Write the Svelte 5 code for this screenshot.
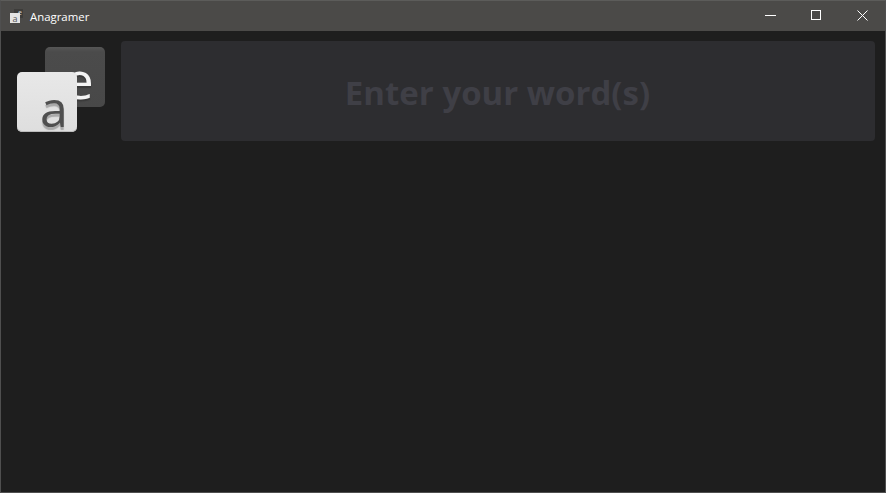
<script>
  const title = 'Anagramer';
</script>

<div class="window">
  <header class="titlebar">
    <div class="app">
      <span class="app-icon" aria-hidden="true">
        <span class="mini-dark"><span class="speck">e</span></span>
        <span class="mini-light">a</span>
      </span>
      <span class="title">{title}</span>
    </div>
    <div class="controls">
      <button class="ctl" aria-label="Minimize">
        <svg width="11" height="11" viewBox="0 0 11 11"><path d="M0 5.5H11" stroke="#fff" fill="none" /></svg>
      </button>
      <button class="ctl" aria-label="Maximize">
        <svg width="11" height="11" viewBox="0 0 11 11"><rect x=".5" y=".5" width="9" height="9" stroke="#fff" fill="none" /></svg>
      </button>
      <button class="ctl" aria-label="Close">
        <svg width="11" height="11" viewBox="0 0 11 11"><path d="M.5.5l10 10M10.5.5l-10 10" stroke="#fff" fill="none" /></svg>
      </button>
    </div>
  </header>
  <main class="content">
    <div class="logo" aria-hidden="true">
      <div class="tile dark"><span>e</span></div>
      <div class="tile light"><span>a</span></div>
    </div>
    <div class="input">Enter your word(s)</div>
  </main>
</div>

<style>
  :global(body) {
    margin: 0;
    background: #1e1e1e;
  }
  .window {
    box-sizing: border-box;
    width: 886px;
    height: 493px;
    border: 1px solid #4f4f4f;
    border-top-color: #5c5c5a;
    display: flex;
    flex-direction: column;
    background: #1e1e1e;
    overflow: hidden;
  }
  .titlebar {
    height: 30px;
    flex: none;
    display: flex;
    justify-content: space-between;
    background: #4b4a48;
  }
  .app {
    display: flex;
    align-items: center;
    padding-left: 9px;
    gap: 7px;
  }
  .app-icon {
    position: relative;
    width: 13px;
    height: 14px;
    display: block;
  }
  .mini-dark {
    position: absolute;
    left: 4px;
    top: 0;
    width: 9px;
    height: 9px;
    background: #3d3c3a;
    color: #ddd;
    font: 7px/8px "Open Sans", sans-serif;
    text-align: right;
  }
  .speck {
    display: block;
    padding-right: 1px;
  }
  .mini-light {
    position: absolute;
    left: 0;
    top: 4px;
    width: 10px;
    height: 10px;
    background: #e4e4e4;
    color: #555;
    font: 9px/11px "Open Sans", sans-serif;
    text-align: center;
  }
  .title {
    color: #fff;
    font: 11.4px/16px "Open Sans", sans-serif;
    margin-top: 1px;
  }
  .controls {
    display: flex;
  }
  .ctl {
    width: 46px;
    height: 30px;
    padding: 0 0 1px;
    border: 0;
    background: transparent;
    display: flex;
    align-items: center;
    justify-content: center;
  }
  .content {
    flex: 1;
    display: flex;
    align-items: flex-start;
    padding: 10px 10px 0 16px;
    gap: 16px;
  }
  .logo {
    flex: none;
    position: relative;
    width: 88px;
    height: 100px;
  }
  .tile {
    position: absolute;
    box-sizing: border-box;
    width: 60px;
    height: 60px;
    border-radius: 5px;
    display: flex;
    align-items: center;
    justify-content: center;
    font-family: "Open Sans", sans-serif;
    font-size: 52px;
    line-height: 60px;
  }
  .dark {
    left: 28px;
    top: 6px;
    background: linear-gradient(#565656, #4b4b4b 8%, #484848);
    color: #f4f4f4;
  }
  .dark span {
    transform: translate(4px, 2px);
    text-shadow: 0 2px 1px #3a3a3a;
  }
  .light {
    left: 0;
    top: 31px;
    background: linear-gradient(#e8e8e8, #dedede);
    color: #4f4f4f;
    box-shadow: inset 0 -1px 0 #bcbcbc;
    font-size: 50px;
  }
  .light span {
    transform: translate(7px, 6px);
    text-shadow: 0 3px 1px #a8a8a8;
  }
  .input {
    flex: 1;
    height: 100px;
    border-radius: 4px;
    background: #2d2d30;
    color: #3f3f46;
    display: flex;
    align-items: center;
    justify-content: center;
    font: 700 33px/40px "Open Sans", sans-serif;
    padding: 3px 1px 0 0;
    box-sizing: border-box;
  }
</style>
